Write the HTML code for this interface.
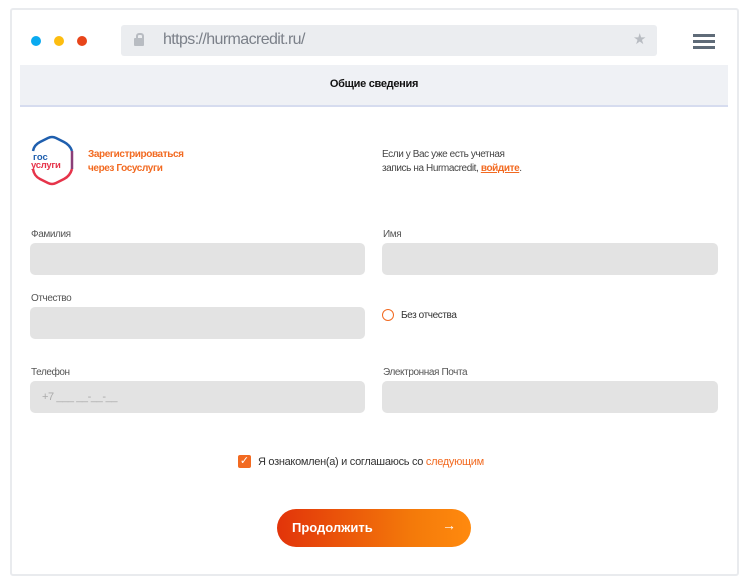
<!DOCTYPE html><html><head><meta charset="utf-8"><style>
body{margin:0;width:751px;height:581px;background:#fff;font-family:"Liberation Sans",sans-serif;position:relative;overflow:hidden}
.a{position:absolute}
.frame{left:10px;top:8px;width:729px;height:568px;border:2px solid #e9ebee;border-radius:3px;box-sizing:border-box}
.lbl{font-size:10px;color:#555;letter-spacing:-.4px}
.box{background:#e3e3e3;border-radius:5px;height:32px}
</style></head><body>
<div class="a frame"></div>
<div class="a" style="left:31px;top:36px;width:10px;height:10px;border-radius:50%;background:#0aaaf0"></div>
<div class="a" style="left:54px;top:36px;width:10px;height:10px;border-radius:50%;background:#fdbd10"></div>
<div class="a" style="left:77px;top:36px;width:10px;height:10px;border-radius:50%;background:#e8451a"></div>
<div class="a" style="left:121px;top:25px;width:536px;height:31px;background:#ebedf0;border-radius:3px"></div>
<div class="a" style="left:134px;top:38px;width:10px;height:8px;background:#b8bcc2;border-radius:1px"></div>
<div class="a" style="left:136px;top:33px;width:4px;height:6px;border:2px solid #b8bcc2;border-bottom:none;border-radius:3px 3px 0 0"></div>
<div class="a" style="left:163px;top:31px;font-size:16px;color:#7b8089;letter-spacing:-.6px">https://hurmacredit.ru/</div>
<div class="a" style="left:633px;top:30px;font-size:15px;color:#b8bcc2">★</div>
<div class="a" style="left:693px;top:34px;width:22px;height:3px;background:#5f6b78;box-shadow:0 6px 0 #5f6b78,0 12px 0 #5f6b78"></div>
<div class="a" style="left:20px;top:65px;width:708px;height:40px;background:#eff1f5;border-bottom:2px solid #d6dcef"></div>
<div class="a" style="left:20px;top:78px;width:708px;text-align:center;font-size:11px;font-weight:bold;color:#111;letter-spacing:-.3px">Общие сведения</div>
<svg class="a" style="left:30px;top:135px" width="46" height="52" viewBox="0 0 46 52"><path d="M42 16 Q40 10 34 7 L26 3 Q22 1 18 3 L10 7 Q4 10 3 16" fill="none" stroke="#1f5fae" stroke-width="2.5"/><path d="M3 34 Q4 41 10 44 L18 48 Q22 50 26 48 L34 44 Q40 41 42 34" fill="none" stroke="#e6344a" stroke-width="2.5"/><path d="M42 16 V34" stroke="#8b3e78" stroke-width="2.5"/><text x="3" y="25" font-size="9.5" fill="#1f5fae" font-weight="bold" font-family="Liberation Sans">гос</text><text x="1" y="33" font-size="9.5" fill="#e6344a" font-weight="bold" font-family="Liberation Sans" letter-spacing="-0.3">услуги</text></svg>
<div class="a" style="left:88px;top:148px;font-size:10px;font-weight:bold;color:#f26a21;line-height:14px;letter-spacing:-.4px">Зарегистрироваться<br>через Госуслуги</div>
<div class="a" style="left:382px;top:148px;font-size:10px;color:#444;line-height:14px;letter-spacing:-.4px">Если у Вас уже есть учетная<br>запись на Hurmacredit, <b style="color:#f26a21;text-decoration:underline">войдите</b>.</div>
<div class="a lbl" style="left:31px;top:229px">Фамилия</div>
<div class="a box" style="left:30px;top:243px;width:335px"></div>
<div class="a lbl" style="left:383px;top:229px">Имя</div>
<div class="a box" style="left:382px;top:243px;width:336px"></div>
<div class="a lbl" style="left:31px;top:293px">Отчество</div>
<div class="a box" style="left:30px;top:307px;width:335px"></div>
<div class="a" style="left:382px;top:309px;width:10px;height:10px;border:1.5px solid #f26a21;border-radius:50%"></div>
<div class="a lbl" style="left:401px;top:310px;color:#333">Без отчества</div>
<div class="a lbl" style="left:31px;top:367px">Телефон</div>
<div class="a box" style="left:30px;top:381px;width:335px"></div>
<div class="a" style="left:42px;top:391px;font-size:11px;color:#aaa;letter-spacing:-.4px">+7 ___ __-__-__</div>
<div class="a lbl" style="left:383px;top:367px">Электронная Почта</div>
<div class="a box" style="left:382px;top:381px;width:336px"></div>
<div class="a" style="left:238px;top:455px;width:13px;height:13px;background:#f26a21;border-radius:2px;color:#fff;font-size:11px;line-height:13px;text-align:center">✓</div>
<div class="a" style="left:258px;top:456px;font-size:11px;color:#333;letter-spacing:-.3px">Я ознакомлен(а) и соглашаюсь со <span style="color:#f26a21">следующим</span></div>
<div class="a" style="left:277px;top:509px;width:194px;height:38px;border-radius:19px;background:linear-gradient(90deg,#e2340a,#f47a0a 70%,#ff8a0e)"></div>
<div class="a" style="left:292px;top:520px;font-size:13px;font-weight:bold;color:#fff">Продолжить</div>
<div class="a" style="left:442px;top:517px;font-size:14px;color:#fff">→</div>
</body></html>
